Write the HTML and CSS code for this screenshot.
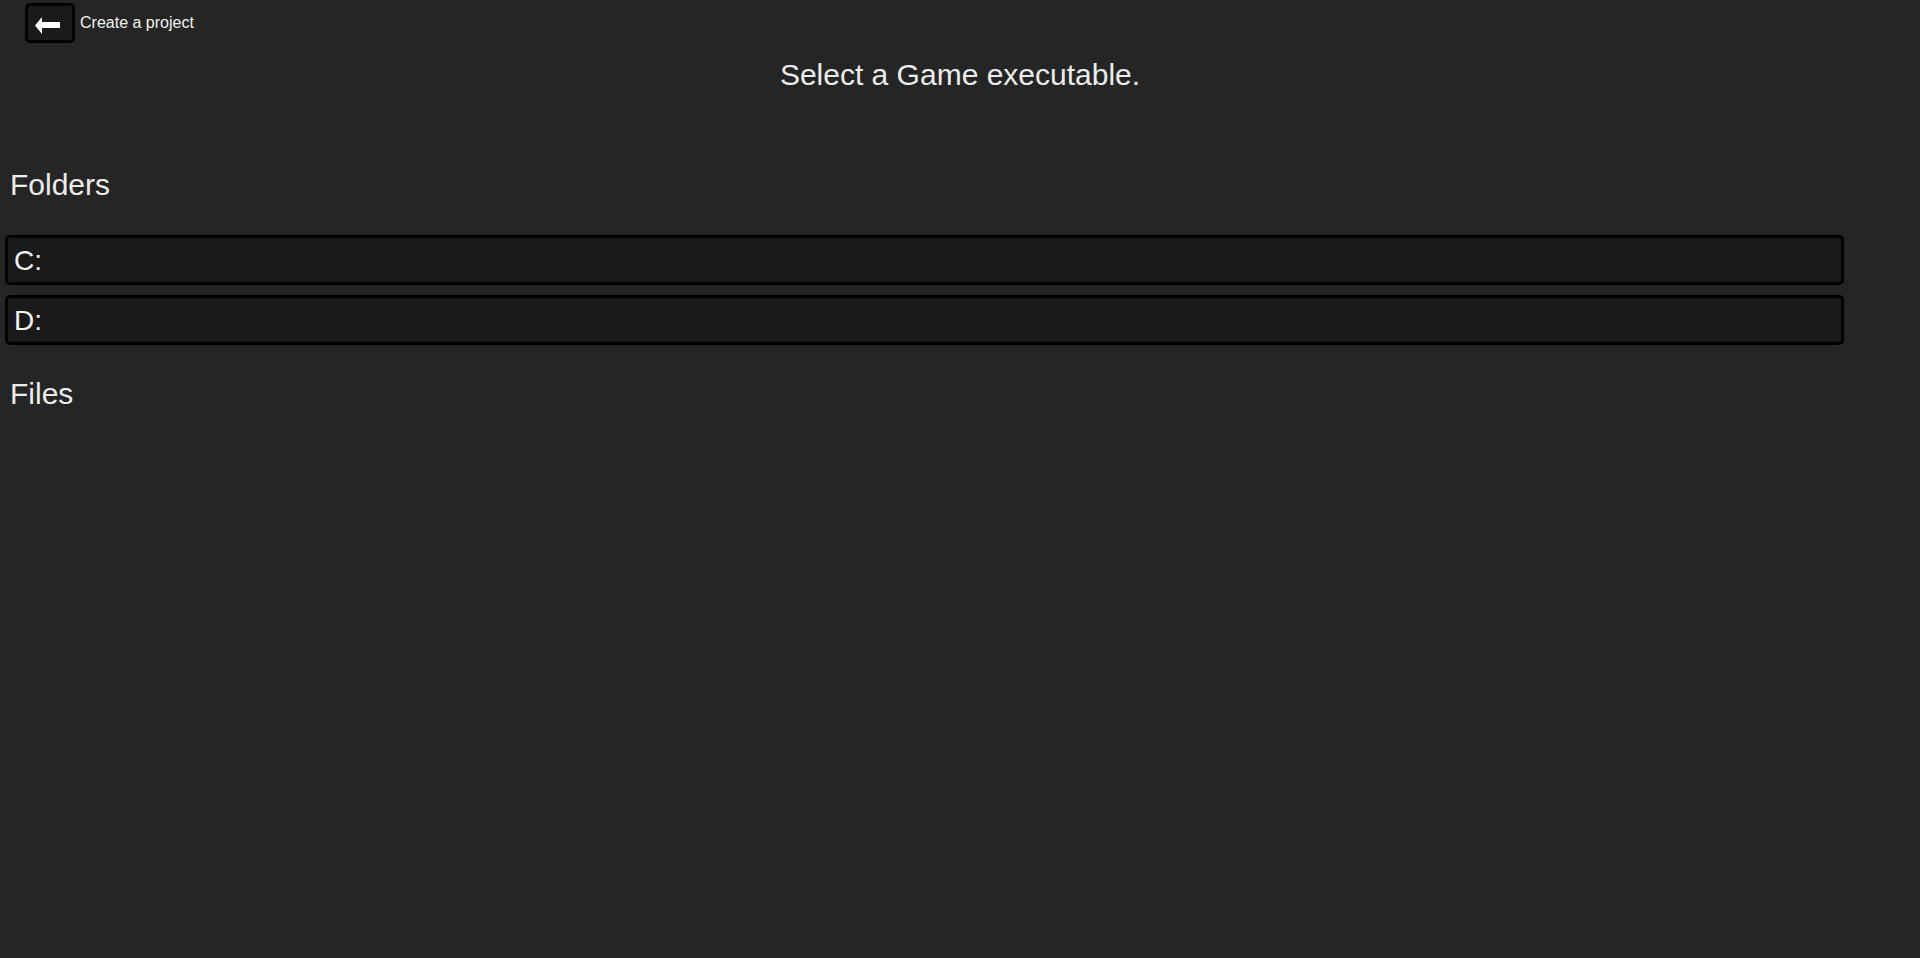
FILE: index.html
```html
<!DOCTYPE html>
<html lang="en">
<head>
<meta charset="utf-8">
<title>Select a Game executable</title>
<link rel="stylesheet" href="styles.css">
</head>
<body>
<div class="page">
  <header class="topbar">
    <button class="back-btn" type="button" aria-label="Back">
      <svg class="back-icon" width="25" height="17" viewBox="0 0 25 17"><polygon points="0,8.5 7,0 7,5 25,5 25,11 7,11 7,17" fill="#ffffff"/></svg>
    </button>
    <span class="back-label">Create a project</span>
  </header>
  <h1 class="title">Select a Game executable.</h1>
  <section class="section folders">
    <h2 class="section-title">Folders</h2>
    <div class="list">
      <div class="row">C:</div>
      <div class="row">D:</div>
    </div>
  </section>
  <section class="section files">
    <h2 class="section-title">Files</h2>
  </section>
</div>
</body>
</html>
```
FILE: styles.css
```css
html, body {
  margin: 0;
  padding: 0;
  background: #252525;
  height: 100%;
}
body {
  font-family: "Liberation Sans", Arial, sans-serif;
  color: #ececec;
}
.page {
  display: flex;
  flex-direction: column;
}
.topbar {
  display: flex;
  align-items: center;
  gap: 5px;
  padding: 3px 0 0 25px;
}
.back-btn {
  box-sizing: border-box;
  width: 50px;
  height: 40px;
  background: #1a1a1a;
  border: 3px solid #000;
  border-radius: 5px;
  padding: 11px 0 0 7px;
  margin: 0;
  display: flex;
  align-items: flex-start;
  justify-content: flex-start;
  cursor: pointer;
}
.back-icon {
  display: block;
}
.back-label {
  font-size: 16px;
  color: #f2f2f2;
}
.title {
  margin: 15px 0 0 0;
  font-size: 30px;
  font-weight: normal;
  text-align: center;
  line-height: normal;
}
.folders {
  margin-top: 76px;
}
.section-title {
  margin: 0;
  padding-left: 10px;
  font-size: 30px;
  font-weight: normal;
  line-height: normal;
}
.list {
  display: flex;
  flex-direction: column;
  gap: 10px;
  margin: 33px 0 0 5px;
  width: 1839px;
}
.row {
  box-sizing: border-box;
  height: 50px;
  background: #1a1a1a;
  border: 3px solid #000;
  border-radius: 5px;
  padding: 7px 6px 0 6px;
  font-size: 28px;
  line-height: normal;
  color: #f2f2f2;
}
.files {
  margin-top: 32px;
}
```
